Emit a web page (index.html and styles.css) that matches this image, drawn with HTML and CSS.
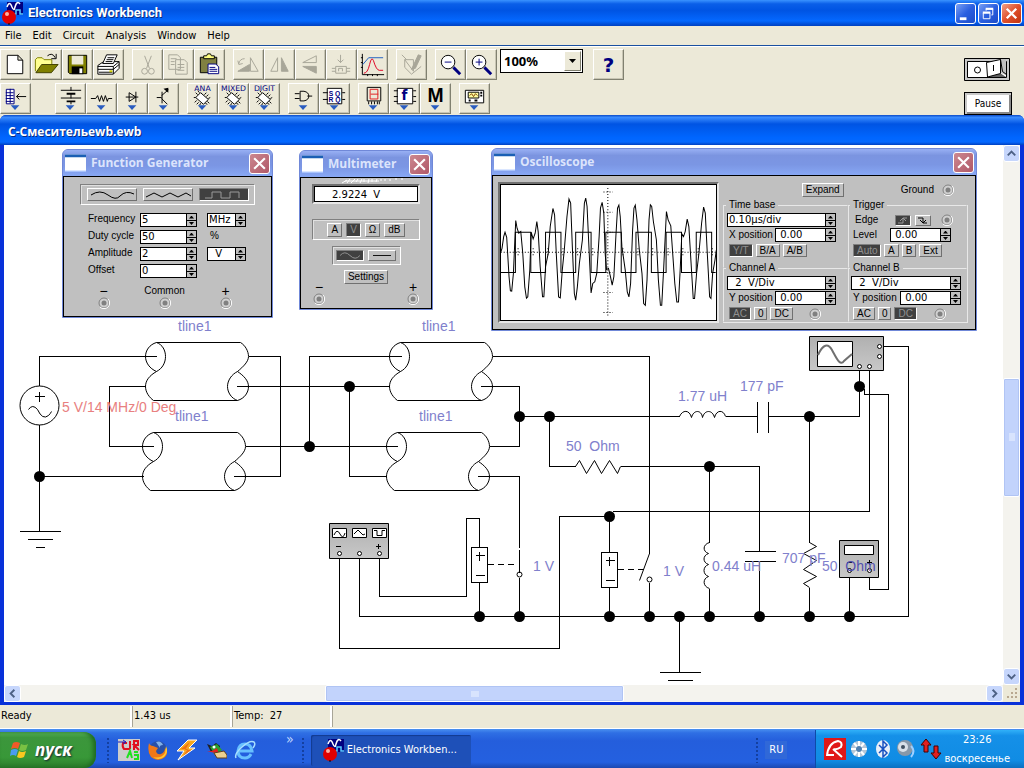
FILE: index.html
```html
<!DOCTYPE html>
<html lang="en">
<head>
<meta charset="utf-8">
<title>Electronics Workbench</title>
<link rel="stylesheet" href="styles.css">
</head>
<body>
<svg class="defs" aria-hidden="true">
  <defs>
    <symbol id="app" viewBox="0 0 24 24">
      <path d="M7 1h16v13H7z" fill="#000080"/>
      <path d="M7 6q2.500-7 5 0q2 5 3 0q2-7 5-3" fill="none" stroke="#fff" stroke-width="1.500"/>
      <path d="M12 13h4V9h4v4h3" fill="none" stroke="#5cf" stroke-width="1.500"/>
      <circle cx="9" cy="16" r="7" fill="#e00000"/><circle cx="7" cy="13" r="2" fill="#ffb0a0"/>
      <path d="M9 22v2" stroke="#000"/>
    </symbol>
    <symbol id="jack" viewBox="0 0 12 12">
      <circle cx="6" cy="6" r="5" fill="#d0d0d0" stroke="#808080"/><path d="M2 10a5.500 5.500 0 0 0 8-8" fill="none" stroke="#fff"/>
      <circle cx="6" cy="6" r="2.500" fill="#808080"/>
    </symbol>
    <symbol id="cross" viewBox="0 0 14 14"><path d="M2 2l10 10M12 2L2 12" stroke="#fff" stroke-width="2"/></symbol>
    <symbol id="winicon" viewBox="0 0 22 18"><path d="M0 0h22v18H0z" fill="#fff"/><path d="M0 0h22v3H0z" fill="#1a5fb4"/><path d="M0 17.500h22" stroke="#9bf"/></symbol>
    <symbol id="drop" viewBox="0 0 30 30"><path d="M10 22h9l-4.500 5z" fill="#2a5cc0"/></symbol>
    <symbol id="chip" viewBox="0 0 30 30">
      <path d="M13 9l8 7-5 5-8-7z" fill="#fff" stroke="#000"/>
      <path d="M10 11l-2-2M12 9l-2-2M8 14l-2 0M17 11l2-2M19 13l2-2M21 15l2-1M9 17l-2 2M11 19l-2 2M13 20l-1 2M20 18l2 2M18 20l2 1" stroke="#000"/>
    </symbol>
    <symbol id="tline" viewBox="0 0 104 60" overflow="visible">
      <path d="M11 0C4 2 0 8 0 14S4 26 11 29C17 26 20 20 20 14S17 2 11 0H95C100 3 103 9 103 14S98 24 92 29C86 32 82 38 82 44S86 56 92 58C99 56 103 50 103 44S98 33 92 29M11 29C4 33 0 38 0 44S4 55 8 58H92"/>
    </symbol>
    <linearGradient id="steel" x2="0" y2="1"><stop stop-color="#b0b0b0"/><stop offset="1" stop-color="#c8c8c8"/></linearGradient>
  </defs>
</svg>

<header class="titlebar">
  <svg class="appicon"><use href="#app"/></svg>
  <h1 class="caption">Electronics Workbench</h1>
  <div class="winbuttons">
    <button class="wb" aria-label="Minimize"><svg viewBox="0 0 20 20"><path d="M4 14h7v3H4z" fill="#fff"/></svg></button>
    <button class="wb" aria-label="Restore"><svg viewBox="0 0 20 20"><path d="M7.500 7V5.500h7v6H13M4.500 9.500h7v6h-7z" fill="none" stroke="#fff"/><path d="M7 5h8M4 9h8" stroke="#fff" stroke-width="2"/></svg></button>
    <button class="wb close" aria-label="Close"><svg viewBox="0 0 20 20"><path d="M5 5l10 10M15 5L5 15" stroke="#fff" stroke-width="2.500"/></svg></button>
  </div>
</header>

<nav class="menubar">
  <button>File</button><button>Edit</button><button>Circuit</button><button>Analysis</button><button>Window</button><button>Help</button>
</nav>

<section class="toolbars">
  <div class="toolrows">
    <div class="toolrow">
      <div class="group">
        <button class="tool" aria-label="New"><svg viewBox="0 0 30 30"><path d="M6.500 5.500h11l5 5v14h-16zM17.500 5.500v5h5" fill="#fff" stroke="#000"/></svg></button>
        <button class="tool" aria-label="Open"><svg viewBox="0 0 30 30"><path d="M3.500 22V10l2-2h5l2 2h8v5" fill="#ffff90" stroke="#808000"/><path d="M4 23.500l6-8.500h17l-7 8.500z" fill="#808000" stroke="#404000"/><path d="M16 6q5-4 8 2m1-4v5h-5" fill="none" stroke="#000"/></svg></button>
        <button class="tool" aria-label="Save"><svg viewBox="0 0 30 30"><path d="M5.500 5.500h19v19H7l-1.500-1.500z" fill="#808000" stroke="#000"/><path d="M9 6h12v9H9z" fill="#ece9d8"/><path d="M9 17h12v8H9z" fill="#000"/><path d="M17 19h3v5h-3z" fill="#fff"/></svg></button>
        <button class="tool" aria-label="Print"><svg viewBox="0 0 30 30"><path d="M4 16l6-4h16v7l-6 6H4z" fill="#fff" stroke="#000"/><path d="M9 14l4-9h11l-4 9z" fill="#fff" stroke="#000"/><path d="M14 8h7M13 10h7M12 12h7M4 17h16l6-5M4 20h16l6-5M20 17v8M5 23h14" fill="none" stroke="#000"/><path d="M16 22h3" stroke="#cc0" stroke-width="2"/></svg></button>
      </div>
      <div class="group">
        <button class="tool off" aria-label="Cut"><svg viewBox="0 0 30 30"><path d="M12 6l5 13M19 6l-5 13"/><circle cx="12" cy="22" r="3"/><circle cx="19" cy="22" r="3"/></svg></button>
        <button class="tool off" aria-label="Copy"><svg viewBox="0 0 30 30"><path d="M5 5h9l3 3v12H5zM12 10h9l3 3v12H12zM7 9h6M7 12h4M7 15h4M14 15h7M14 18h7M14 21h7"/></svg></button>
        <button class="tool" aria-label="Paste"><svg viewBox="0 0 30 30"><path d="M5.500 7.500h17v16h-17z" fill="#808040" stroke="#000"/><path d="M9 9V6h3l1-2h3l1 2h3v3z" fill="#ffff80" stroke="#000"/><path d="M13.500 14.500h8l3 3v7h-11z" fill="#fff" stroke="#000080"/><path d="M15 18h6M15 20h8M15 22h8" stroke="#000080"/></svg></button>
      </div>
      <div class="group">
        <button class="tool off" aria-label="Rotate"><svg viewBox="0 0 30 30"><path d="M4 22l12-7v7z" class="fill"/><path d="M17 22V8l8 14zM5 14q1-5 6-5M4 11l1 4 4-1"/></svg></button>
        <button class="tool off" aria-label="Flip horizontal"><svg viewBox="0 0 30 30"><path d="M13 22V8L6 22z"/><path d="M17 22V8l7 14z" class="fill"/></svg></button>
        <button class="tool off" aria-label="Flip vertical"><svg viewBox="0 0 30 30"><path d="M21 6v7H7z"/><path d="M21 24v-7H7z" class="fill"/></svg></button>
        <button class="tool off" aria-label="Create subcircuit"><svg viewBox="0 0 30 30"><path d="M9 17h11v7H9zM5 19h4M5 22h4M20 19h4M20 22h4M14 5v8M11 10l3 3 3-3M12 22v-3h4v3"/></svg></button>
        <button class="tool" aria-label="Display graphs"><svg viewBox="0 0 30 30"><path d="M4.500 4v21.500H27M3 8h2M3 13h2M3 18h2M10 25v2M15 25v2M20 25v2" fill="none" stroke="#000"/><path d="M5 15l6-7h15" fill="none" stroke="#2060c0"/><path d="M6 24q4 0 6-9t4-4q3 10 6 10h4" fill="none" stroke="#e00020"/></svg></button>
      </div>
      <div class="group">
        <button class="tool off" aria-label="Component properties"><svg viewBox="0 0 30 30"><path d="M5 5l5 5M8 10h9v12zM8 10v8l7 7 10-8"/><path d="M15 20l7-15 3 1-6 13z" class="fill"/></svg></button>
      </div>
      <div class="group">
        <button class="tool" aria-label="Zoom out"><svg viewBox="0 0 30 30"><path d="M18 18l7 7" stroke="#000080" stroke-width="3"/><circle cx="12.500" cy="12.500" r="7" fill="#fff" stroke="#000"/><path d="M9 12.500h7" stroke="#000080"/></svg></button>
        <button class="tool" aria-label="Zoom in"><svg viewBox="0 0 30 30"><path d="M18 18l7 7" stroke="#000080" stroke-width="3"/><circle cx="12.500" cy="12.500" r="7" fill="#fff" stroke="#000"/><path d="M9 12.500h7M12.500 9v7" stroke="#000080"/></svg></button>
      </div>
      <div class="zoombox">
        <select class="zoom" aria-label="Zoom"><option>100%</option></select>
        <span class="zoomarrow" aria-hidden="true"></span>
      </div>
      <button class="tool help" aria-label="Help">?</button>
    </div>
    <div class="toolrow second">
      <div class="group wide">
        <button class="tool" aria-label="Favorites"><svg viewBox="0 0 30 30"><path d="M5.500 5.500h8v15h-8zM5 9h8M5 12h8M5 15h8M5 18h8M9.500 5v15" fill="#fff" stroke="#000080"/><path d="M16 13h10M19 10l-3 3 3 3" fill="none" stroke="#000"/><use href="#drop"/></svg></button>
      </div>
      <div class="group">
        <button class="tool" aria-label="Sources"><svg viewBox="0 0 30 30"><path d="M5 6.500h21M5 14.500h21M15.500 3v4M15.500 10v5M15.500 18v3" stroke="#000"/><path d="M11 10h9M11 18h9" stroke="#000" stroke-width="2"/><use href="#drop"/></svg></button>
        <button class="tool" aria-label="Basic"><svg viewBox="0 0 30 30"><path d="M4 15h5l2-3 2 6 2-6 2 6 2-6 2 6 1-3h4" fill="none" stroke="#000"/><use href="#drop"/></svg></button>
        <button class="tool" aria-label="Diodes"><svg viewBox="0 0 30 30"><path d="M8 13.500h13M11.500 9v9l7-4.500zM18.500 8v11" fill="none" stroke="#000"/><use href="#drop"/></svg></button>
        <button class="tool" aria-label="Transistors"><svg viewBox="0 0 30 30"><path d="M8 14h5M13.500 8v12M13 12l7-6M13 15l6 6" fill="none" stroke="#000"/><path d="M20 4v5l-5-4z"/><use href="#drop"/></svg></button>
      </div>
      <div class="group">
        <button class="tool" aria-label="Analog ICs"><svg viewBox="0 0 30 30"><use href="#chip"/><text x="15" y="7" class="chiptext">ANA</text><use href="#drop"/></svg></button>
        <button class="tool" aria-label="Mixed ICs"><svg viewBox="0 0 30 30"><use href="#chip"/><text x="15" y="7" class="chiptext">MIXED</text><use href="#drop"/></svg></button>
        <button class="tool" aria-label="Digital ICs"><svg viewBox="0 0 30 30"><use href="#chip"/><text x="15" y="7" class="chiptext">DIGIT</text><use href="#drop"/></svg></button>
      </div>
      <div class="group">
        <button class="tool" aria-label="Logic gates"><svg viewBox="0 0 30 30"><path d="M6 10h5M6 15h5M19 12.500h5M11.500 7.500h4q5 1 5 5t-5 5h-4z" fill="none" stroke="#000"/><use href="#drop"/></svg></button>
        <button class="tool" aria-label="Digital"><svg viewBox="0 0 30 30"><path d="M7.500 4.500h15v16h-15zM3 9h5M3 16h5M23 9h3M23 16h3" fill="#fff" stroke="#000"/><text x="15" y="12" class="tiny">S Q</text><text x="15" y="19" class="tiny">R Q</text><use href="#drop"/></svg></button>
      </div>
      <div class="group">
        <button class="tool" aria-label="Indicators"><svg viewBox="0 0 30 30"><path d="M8.500 3.500h14v14h-14zM10 18v3M13 18v3M16 18v3M19 18v3M21 18v3" fill="#ece9d8" stroke="#000"/><path d="M11.500 5.500h8v10h-8zM12 10.500h8" fill="none" stroke="#e02020"/><use href="#drop"/></svg></button>
        <button class="tool" aria-label="Controls"><svg viewBox="0 0 30 30"><path d="M7.500 4.500h16v16h-16zM4 7h4M4 13h4M4 18h4M24 7h3M24 13h3M24 18h3" fill="#fff" stroke="#000"/><text x="15" y="17" class="fx">f</text><use href="#drop"/></svg></button>
        <button class="tool" aria-label="Miscellaneous"><svg viewBox="0 0 30 30"><text x="15" y="19" class="em">M</text><use href="#drop"/></svg></button>
      </div>
      <div class="group">
        <button class="tool" aria-label="Instruments"><svg viewBox="0 0 30 30"><path d="M5.500 6.500h19v13h-19z" fill="#fff" stroke="#000"/><path d="M8.500 8.500h11v6h-11z" fill="#ffffa0" stroke="#000"/><path d="M10 12l2-2 2 3 2-3 2 2" fill="none" stroke="#804000"/><path d="M9 17h2M15 17h3M21 9h2M21 12h2" stroke="#000" stroke-width="2"/><use href="#drop"/></svg></button>
      </div>
    </div>
  </div>
  <div class="runbox">
    <button class="power" aria-label="Activate simulation"><svg viewBox="0 0 48 24"><path d="M.5.500h45v22H.5z" fill="#c8c8c8" stroke="#000"/><path d="M3.500 3.500h39v16h-39z" fill="#fff" stroke="#000"/><circle cx="13.500" cy="12" r="3" fill="none" stroke="#000"/><path d="M37 1h5v16l-5-2z" fill="#c0c0c0"/><path d="M23 19l13-4 6 4z" fill="#606060"/><path d="M22.500 4.500l14-3v14l-13 3.500z" fill="#fff" stroke="#000"/><path d="M36.500 1.500l2 12 4 3M29.500 7v6" fill="none" stroke="#000"/></svg></button>
    <button class="pause">Pause</button>
  </div>
</section>

<main class="mdi">
  <h2 class="mdititle">С-Смесительewb.ewb</h2>
  <div class="client">
    <div class="canvas">
      <svg class="schematic" viewBox="4 145 999 541" width="999" height="541" role="img" aria-label="Mixer circuit">
        <g class="wires">
          <path d="M39 385V356H156M39 424V531M39 476H143M145 386H109V446H153M248 356H280V476H233M236 386H389M245 446H397M309 446V356H401M349 386V476H386M492 356H649V553M480 386H519V446H489M477 476H519V547M519 549V572M519 577V616M519 416H679M725 416H757M768 416H859V370M549 416V466H575M620 466H759V551M759 561V616M709 466V542M709 588V616M612 511H869V370M609 552V516H559V648H339V556M609 587V616M649 582V616M679 616V672M359 556V616H908V346H883M379 556V596H466V518H479V547M479 582V616M809 416V542M809 587V616M849 573V616M869 573V589H888V394H864V389H861"/>
          <path d="M19 531H60M27 539H52M35 547H44M659 672H700M667 680H692M757 401V432M768 401V432M744 551H775M744 561H775M471 547H487V582H471zM601 552H617V587H601zM475 555H484M479 551V560M475 575H484M605 560H614M609 556V565M605 580H614M34 396H44M39 391V401"/>
          <path class="dash" d="M487 564H515M617 569H644"/>
        </g>
        <g class="parts">
          <circle cx="39" cy="405" r="19.500"/>
          <path d="M28 409Q32 403 37 409Q42 420 48 415Q50 413 51 411"/>
          <use href="#tline" x="145" y="342" width="104" height="60"/>
          <use href="#tline" x="142" y="432" width="104" height="60"/>
          <use href="#tline" x="389" y="342" width="104" height="60"/>
          <use href="#tline" x="386" y="432" width="104" height="60"/>
          <path d="M575 466L579 460L586 473L594 460L601 473L609 460L617 473L620 466M809 542L816 546L803 553L816 560L803 569L816 576L803 583L809 587"/>
          <path d="M679 416C682 409 689 409 691 417C693 409 701 409 702 417C704 409 712 409 714 417C716 409 723 409 725 416M709 542C702 544 702 551 708 553C702 555 702 562 708 564C702 566 702 574 708 576C702 578 702 586 709 588"/>
          <path d="M649 553L639 580"/><circle cx="519" cy="574" r="2.500"/><circle cx="649" cy="579" r="2.500"/>
        </g>
        <g class="nodes">
          <circle cx="39.500" cy="476.500" r="5.500"/><circle cx="309.500" cy="446.500" r="5.500"/><circle cx="349.500" cy="386.500" r="5.500"/><circle cx="519.500" cy="416.500" r="5.500"/><circle cx="549.500" cy="416.500" r="5.500"/><circle cx="709.500" cy="466.500" r="5.500"/><circle cx="809.500" cy="416.500" r="5.500"/><circle cx="859.500" cy="386.500" r="5.500"/><circle cx="609.500" cy="516.500" r="5.500"/><circle cx="479.500" cy="616.500" r="5.500"/><circle cx="519.500" cy="616.500" r="5.500"/><circle cx="609.500" cy="616.500" r="5.500"/><circle cx="649.500" cy="616.500" r="5.500"/><circle cx="679.500" cy="616.500" r="5.500"/><circle cx="709.500" cy="616.500" r="5.500"/><circle cx="759.500" cy="616.500" r="5.500"/><circle cx="809.500" cy="616.500" r="5.500"/><circle cx="849.500" cy="616.500" r="5.500"/>
        </g>
        <g class="instr">
          <path class="box" d="M329.500 523.500h59v35h-59z"/>
          <path class="lcd" d="M332.500 528.500h14v9h-14zM352.500 528.500h14v9h-14zM372.500 528.500h14v9h-14z"/>
          <path d="M334 535q3-7 6-1t5-1M354 534l4-4 5 5 2-1M374 530.500h3v5h5v-5h3M336 546.500h5M376 546.500h5M378.500 544v5"/>
          <circle cx="339.500" cy="553.500" r="2"/><circle cx="359.500" cy="553.500" r="2"/><circle cx="379.500" cy="553.500" r="2"/>
          <path class="box" d="M809.500 336.500h74v34h-74z"/>
          <path class="lcd" d="M817.500 341.500h35v25h-35z"/>
          <path class="scope" d="M818 355C823 344 828 343 832 350S840 367 844 361T852 354"/>
          <circle cx="879.500" cy="346.500" r="2"/><circle cx="879.500" cy="356.500" r="2"/><circle cx="859.500" cy="366.500" r="2"/><circle cx="869.500" cy="366.500" r="2"/>
          <path class="box" d="M839.500 540.500h39v37h-39z"/>
          <path class="lcd" d="M844.500 545.500h29v9h-29z"/>
          <path d="M847 562.500h5M867 562.500h5M869.500 560v5"/>
          <circle cx="849.500" cy="570.500" r="2"/><circle cx="869.500" cy="570.500" r="2"/>
        </g>
        <g class="labels">
          <text x="178" y="331">tline1</text><text x="422" y="331">tline1</text><text x="175" y="421">tline1</text><text x="419" y="421">tline1</text>
          <text x="62" y="412" class="red">5 V/14 MHz/0 Deg</text>
          <text x="678" y="401">1.77 uH</text><text x="740" y="391">177 pF</text><text x="566" y="451">50  Ohm</text>
          <text x="712" y="571">0.44 uH</text><text x="782" y="563">707 pF</text><text x="822" y="571">50  <tspan class="dark">Ohm</tspan></text>
          <text x="533" y="571">1 V</text><text x="663" y="576">1 V</text>
        </g>
      </svg>

      <section class="win fg">
        <header class="wintitle"><svg class="winicon"><use href="#winicon"/></svg><h3>Function Generator</h3><button class="winclose" aria-label="Close"><svg><use href="#cross"/></svg></button></header>
        <div class="winbody">
          <div class="etched waves">
            <button class="btn wave" aria-label="Sine"><svg viewBox="0 0 48 10"><path d="M3 5Q12-1 20 5T32 6Q38 0 46 4"/></svg></button>
            <button class="btn wave" aria-label="Triangle"><svg viewBox="0 0 48 10"><path d="M2 7l8-4 8 4 8-4 8 4 8-4 5 3"/></svg></button>
            <button class="btn wave on" aria-label="Square"><svg viewBox="0 0 48 10"><path d="M5 8h7V2h9v6h9V2h9v6"/></svg></button>
          </div>
          <div class="params">
            <label for="fr">Frequency</label><span class="field"><input id="fr" value="5"><span class="spin"><button aria-label="Up"></button><button aria-label="Down"></button></span></span>
            <span class="field unit"><input aria-label="Frequency unit" value="MHz"><span class="spin"><button aria-label="Up"></button><button aria-label="Down"></button></span></span>
            <label for="dc">Duty cycle</label><span class="field"><input id="dc" value="50"><span class="spin"><button aria-label="Up"></button><button aria-label="Down"></button></span></span><span class="pct">%</span>
            <label for="am">Amplitude</label><span class="field"><input id="am" value="2"><span class="spin"><button aria-label="Up"></button><button aria-label="Down"></button></span></span>
            <span class="field unit"><input aria-label="Amplitude unit" value="  V"><span class="spin"><button aria-label="Up"></button><button aria-label="Down"></button></span></span>
            <label for="of">Offset</label><span class="field"><input id="of" value="0"><span class="spin"><button aria-label="Up"></button><button aria-label="Down"></button></span></span>
          </div>
          <div class="terminals">
            <span class="term"><b class="sign">−</b><svg class="jack"><use href="#jack"/></svg></span>
            <span class="term">Common<svg class="jack"><use href="#jack"/></svg></span>
            <span class="term"><b class="sign">+</b><svg class="jack"><use href="#jack"/></svg></span>
          </div>
        </div>
      </section>

      <section class="win mm">
        <header class="wintitle"><svg class="winicon"><use href="#winicon"/></svg><h3>Multimeter</h3><button class="winclose" aria-label="Close"><svg><use href="#cross"/></svg></button></header>
        <div class="winbody">
          <svg class="smear" viewBox="0 0 64 6" aria-hidden="true"><path d="M1 5l5-3M6 5l3-4M10 5l4-4M15 4l2-3M19 5l2-4M23 4V1M27 5l1-4M31 4V1M35 4l1-3M40 3V1M44 3V1M49 3V1M55 2V0M61 2V0M4 3h34"/></svg>
          <output class="reading">2.9224&nbsp; V</output>
          <div class="etched modes"><button class="btn">A</button><button class="btn on">V</button><button class="btn">Ω</button><button class="btn">dB</button></div>
          <div class="etched acdc"><button class="btn on" aria-label="AC"><svg viewBox="0 0 26 10"><path d="M2 5q5-6 11 0t11 0"/></svg></button><button class="btn" aria-label="DC"><svg viewBox="0 0 26 10"><path d="M3 5h20"/></svg></button></div>
          <button class="btn settings">Settings</button>
          <div class="terminals">
            <span class="term"><b class="sign">−</b><svg class="jack"><use href="#jack"/></svg></span>
            <span class="term"><b class="sign">+</b><svg class="jack"><use href="#jack"/></svg></span>
          </div>
        </div>
      </section>

      <section class="win osc">
        <header class="wintitle"><svg class="winicon"><use href="#winicon"/></svg><h3>Oscilloscope</h3><button class="winclose" aria-label="Close"><svg><use href="#cross"/></svg></button></header>
        <div class="winbody">
          <div class="screen">
            <svg viewBox="48 135 648 405" role="img" aria-label="Waveforms">
              <path class="axis" d="M370 145V532M50 337H694"/>
              <path class="ticks" d="M357 157H385M357 217H385M357 277H385M357 397H385M357 457H385M357 517H385M102 325V352M147 325V352M191 325V352M236 325V352M280 325V352M325 325V352M415 325V352M460 325V352M504 325V352M550 325V352M594 325V352M640 325V352M682 325V352"/>
              <path d="M48 277V397H94V277H140V397H184V277H230V397H274V277H320V397H364V277H410V397H454V277H500V397H544V277H590V397H634V277H680V397H692"/>
              <path d="M50 337L54 325L59 290L63 277L68 292L75 410L79 452L83 453L88 400L95 242L99 265L104 280L110 275L116 340L122 440L127 474L131 470L137 390L141 277L147 297L153 280L158 245L162 275L168 380L175 470L179 470L184 380L192 340L198 260L206 206L211 225L216 340L223 470L228 473L234 390L240 330L248 230L254 178L259 190L264 320L270 460L274 480L279 440L285 370L294 300L300 190L304 175L308 200L314 330L320 458L325 430L331 425L337 400L344 290L348 205L353 188L358 220L362 340L366 388L372 385L378 410L383 435L388 410L394 290L399 205L403 196L407 230L412 320L422 390L428 455L433 470L438 430L444 270L448 205L452 196L457 240L464 330L472 400L477 490L482 495L487 420L493 240L497 195L501 200L506 245L515 300L521 420L527 495L531 495L537 380L545 215L550 240L558 258L563 330L570 430L576 485L581 485L586 390L591 282L596 290L601 275L607 238L612 260L618 360L625 475L629 475L635 400L642 340L650 250L656 202L661 220L667 340L674 470L678 475L683 400L690 360L694 330"/>
            </svg>
          </div>
          <div class="controls">
            <div class="top"><button class="btn expand">Expand</button><span class="ground">Ground<svg class="jack"><use href="#jack"/></svg></span></div>
            <div class="panels">
              <section class="panel">
                <h4>Time base</h4>
                <span class="field"><input aria-label="Time base" value="0.10µs/div"><span class="spin"><button aria-label="Up"></button><button aria-label="Down"></button></span></span>
                <div class="line"><label for="xp">X position</label><span class="field short"><input id="xp" value=" 0.00"><span class="spin"><button aria-label="Up"></button><button aria-label="Down"></button></span></span></div>
                <div class="btnrow"><button class="btn on">Y/T</button><button class="btn">B/A</button><button class="btn">A/B</button></div>
              </section>
              <section class="panel">
                <h4>Trigger</h4>
                <div class="edge"><span>Edge</span><button class="btn on" aria-label="Rising edge"><svg viewBox="0 0 14 9"><path d="M2 7h5V2h4M4 5l3-3 3 3"/></svg></button><button class="btn" aria-label="Falling edge"><svg viewBox="0 0 14 9"><path d="M2 2h5v5h4M4 4l3 3 3-3"/></svg></button><svg class="jack"><use href="#jack"/></svg></div>
                <div class="line level"><label for="lv">Level</label><span class="field short"><input id="lv" value=" 0.00"><span class="spin"><button aria-label="Up"></button><button aria-label="Down"></button></span></span></div>
                <div class="btnrow"><button class="btn on auto">Auto</button><button class="btn">A</button><button class="btn">B</button><button class="btn">Ext</button></div>
              </section>
              <section class="panel">
                <h4>Channel A</h4>
                <span class="field"><input aria-label="Channel A scale" value="  2  V/Div"><span class="spin"><button aria-label="Up"></button><button aria-label="Down"></button></span></span>
                <div class="line"><label for="ya">Y position</label><span class="field short"><input id="ya" value=" 0.00"><span class="spin"><button aria-label="Up"></button><button aria-label="Down"></button></span></span></div>
                <div class="btnrow"><button class="btn on">AC</button><button class="btn">0</button><button class="btn">DC</button><svg class="jack"><use href="#jack"/></svg></div>
              </section>
              <section class="panel">
                <h4>Channel B</h4>
                <span class="field"><input aria-label="Channel B scale" value="  2  V/Div"><span class="spin"><button aria-label="Up"></button><button aria-label="Down"></button></span></span>
                <div class="line"><label for="yb">Y position</label><span class="field short"><input id="yb" value=" 0.00"><span class="spin"><button aria-label="Up"></button><button aria-label="Down"></button></span></span></div>
                <div class="btnrow"><button class="btn">AC</button><button class="btn">0</button><button class="btn on">DC</button><svg class="jack"><use href="#jack"/></svg></div>
              </section>
            </div>
          </div>
        </div>
      </section>
    </div>
    <div class="vscroll">
      <button class="sb" aria-label="Scroll up"><svg viewBox="0 0 16 16"><path d="M4 10l4-4 4 4"/></svg></button>
      <div class="vtrack"><div class="vthumb"><svg viewBox="0 0 8 8"><path d="M1 1h6M1 3h6M1 5h6M1 7h6"/></svg></div></div>
      <button class="sb" aria-label="Scroll down"><svg viewBox="0 0 16 16"><path d="M4 6l4 4 4-4"/></svg></button>
    </div>
    <div class="hscroll">
      <button class="sb" aria-label="Scroll left"><svg viewBox="0 0 16 16"><path d="M10 4L6 8l4 4"/></svg></button>
      <div class="htrack"><div class="hthumb"><svg viewBox="0 0 8 8"><path d="M1 1v6M3 1v6M5 1v6M7 1v6"/></svg></div></div>
      <button class="sb" aria-label="Scroll right"><svg viewBox="0 0 16 16"><path d="M6 4l4 4-4 4"/></svg></button>
    </div>
    <svg class="grip" viewBox="0 0 17 17" aria-hidden="true"><path d="M12 4h2M8 8h2M12 8h2M4 12h2M8 12h2M12 12h2" stroke="#b8a890" stroke-width="2"/></svg>
  </div>
</main>

<footer class="status"><span>Ready</span><span>1.43 us</span><span>Temp:&nbsp; 27</span><span></span></footer>

<footer class="taskbar">
  <button class="start"><svg viewBox="0 0 20 20"><path d="M3 3q3-2 7 0L8 9Q5 7 1 9z" fill="#f05a28"/><path d="M11 4q4 2 7 0l-2 6q-4 2-7 0z" fill="#7ac143"/><path d="M1 10q4-2 7 0l-2 6q-3-2-6 0z" fill="#4a9cf0"/><path d="M9 11q3 2 7 0l-2 6q-4 2-7 0z" fill="#fcc820"/></svg><span>пуск</span></button>
  <span class="dots"></span>
  <div class="quick">
    <button aria-label="Circuit editor"><svg viewBox="0 0 22 22"><path d="M0 0h22v22H0z" fill="#ccc"/><path d="M9 4H5q-1 4 1 6h3M12 2v8M12 10H9M16 11V2h4v4h-4l5 5" fill="none" stroke="#e01020" stroke-width="2"/><path d="M0 3h8M5 1l3 2-3 2" fill="none" stroke="#2020c0"/><path d="M9 19l3-7 2 7M16 13h4M16 16h4v4h-4" fill="none" stroke="#20e020" stroke-width="2"/></svg></button>
    <button aria-label="Firefox"><svg viewBox="0 0 22 22"><circle cx="11" cy="11" r="9" fill="#2850a8"/><path d="M9 3q5-2 7 3-4 0-3 3z" fill="#80b0e8"/><path d="M2 4q1 3 4 3l5 2-2 3q1 4 5 3 4-2 4-6 4 5 0 9-7 6-14 0Q0 13 2 4z" fill="#f07818"/><path d="M19 7q3 6-2 11-6 4-11 0 8 2 12-4z" fill="#ffc830"/></svg></button>
    <button aria-label="Winamp"><svg viewBox="0 0 22 22"><path d="M12 1h9l-8 8h6L2 21l6-9H1z" fill="#f8a820" stroke="#fff"/><path d="M14 3l-9 7h7l-5 7 8-6H9z" fill="#f07010"/></svg></button>
    <button aria-label="Messenger"><svg viewBox="0 0 22 22"><path d="M2 5l5 2 4-3 4 3v6H6z" fill="#202020"/><path d="M5 8l7-3 5 6-7 5z" fill="#28a030"/><path d="M2 12h5l5-3 2 6z" fill="#e02020"/><path d="M9 14l10-2 3 4v3H12z" fill="#ecd090" stroke="#604020"/><circle cx="9" cy="8" r="1.500" fill="#fff"/></svg></button>
    <button aria-label="Internet Explorer"><svg viewBox="0 0 22 22"><path d="M17 15q-2 4-6 4-7 0-7-7 1-7 7-7t7 7H5" fill="none" stroke="#68c0ff" stroke-width="3"/><path d="M2 19Q0 15 8 8T20 3q2 2-1 6" fill="none" stroke="#a8e0ff" stroke-width="1.500"/></svg></button>
  </div>
  <span class="more">»</span>
  <span class="dots"></span>
  <button class="task"><svg class="appicon"><use href="#app"/></svg><span>Electronics Workben...</span></button>
  <span class="dots traydots"></span>
  <span class="lang">RU</span>
  <div class="tray">
    <svg viewBox="0 0 22 22"><path d="M0 0h22v22H0z" fill="#e01818"/><path d="M3 18Q4 5 14 3q5 1 3 6-4 3-7 2M9 11l9 8M4 17h6" fill="none" stroke="#fff" stroke-width="2"/></svg>
    <svg viewBox="0 0 22 22"><circle cx="11" cy="11" r="8" fill="#b8c8d8"/><path d="M11 3v16M3 11h16M6 5l10 12M16 5L6 17" stroke="#fff" stroke-width="2"/><circle cx="11" cy="11" r="3" fill="#5080b0"/></svg>
    <svg viewBox="0 0 22 22"><ellipse cx="11" cy="11" rx="7" ry="9" fill="#e8eef8"/><path d="M7 7l8 8-4 4V3l4 4-8 8" fill="none" stroke="#1850c0" stroke-width="1.500"/></svg>
    <svg viewBox="0 0 22 22"><circle cx="9" cy="10" r="8" fill="#8898a8"/><circle cx="7" cy="9" r="5" fill="#d8e0e8"/><circle cx="7" cy="9" r="2" fill="#405060"/><path d="M15 8q5 5 0 11" fill="none" stroke="#a0d0ff" stroke-width="2"/></svg>
    <svg viewBox="0 0 22 22"><path d="M6 1l5 6H8v7H4V7H1z" fill="#e02020" stroke="#400"/><path d="M16 21l-5-6h3V8h4v7h3z" fill="#e02020" stroke="#400"/></svg>
    <div class="clock"><span>23:26</span><span>воскресенье</span></div>
  </div>
</footer>
</body>
</html>
```
FILE: styles.css
```css
* { box-sizing: border-box; }
body {
  margin: 0;
  height: 100vh;
  display: flex;
  flex-direction: column;
  overflow: hidden;
  background: #ece9d8;
  color: #000;
  font: 11px/14px "DejaVu Sans Condensed", "Noto Sans", sans-serif;
}
h1, h2, h3, h4 { margin: 0; font-size: inherit; font-weight: inherit; }
button, input, select { font: inherit; color: inherit; margin: 0; padding: 0; border: 0; border-radius: 0; background: none; }
svg { display: block; flex: none; }
.defs { position: absolute; width: 0; height: 0; }

.titlebar {
  flex: none;
  height: 26px;
  display: flex;
  align-items: center;
  gap: 4px;
  padding-right: 2px;
  background: linear-gradient(#3a93ff 0, #0a5fe8 15%, #0054e3 40%, #0468ff 80%, #0040c0 100%);
}
.appicon { width: 24px; height: 24px; }
.caption, .mdititle {
  color: #fff;
  text-shadow: 1px 1px 0 #0a2a80;
}
.caption { flex: 1; font: bold 13px/16px Roboto, sans-serif; }
.mdititle { font: bold 12px/16px "Open Sans", sans-serif; }
.winbuttons { display: flex; gap: 2px; }
.wb {
  width: 21px;
  height: 21px;
  border: 1px solid #fff;
  border-radius: 3px;
  background: linear-gradient(135deg, #7aa0f4, #2a5fe0 50%, #1c4cc8);
}
.wb svg { width: 19px; height: 19px; }
.wb.close { background: linear-gradient(135deg, #f0a088, #e0502c 50%, #c03410); }

.menubar {
  flex: none;
  height: 20px;
  display: flex;
  align-items: center;
  gap: 11px;
  padding: 0 5px;
  border-bottom: 1px solid #1a50a0;
}

.toolbars {
  flex: none;
  display: flex;
  justify-content: space-between;
  border-top: 1px solid #fff;
  padding: 2px 12px 0 0;
}
.toolrows { display: flex; flex-direction: column; gap: 3px; }
.toolrow { display: flex; align-items: flex-start; gap: 8px; }
.group { display: flex; }
.wide { margin-right: 16px; }
.tool {
  width: 31px;
  height: 31px;
  border: 1px solid;
  border-color: #fff #808070 #808070 #fff;
  box-shadow: inset -1px -1px 0 #c8c5b4;
}
.tool svg { width: 29px; height: 29px; }
.off path, .off circle { fill: none; stroke: #a8a698; }
.off .fill { fill: #a8a698; }
.chiptext { font: 8px "DejaVu Sans", sans-serif; fill: #000080; text-anchor: middle; }
.tiny { font: bold 7px "Liberation Sans", sans-serif; fill: #000080; text-anchor: middle; }
.fx { font: bold 14px "DejaVu Sans", sans-serif; fill: #000080; text-anchor: middle; }
.em { font: bold 20px "Liberation Sans", sans-serif; text-anchor: middle; }
.zoombox { position: relative; width: 83px; height: 24px; margin-left: -5px; border: 1px solid #000; background: #fff; }
.zoom { appearance: none; width: 100%; height: 22px; padding: 0 3px; font: bold 13px/20px "Noto Sans", sans-serif; }
.zoomarrow {
  position: absolute;
  top: 1px;
  right: 1px;
  width: 17px;
  height: 20px;
  border: 1px solid;
  border-color: #fff #808070 #808070 #fff;
  background: #ece9d8;
  pointer-events: none;
}
.zoomarrow::after { content: ""; display: block; margin: 7px auto; width: 7px; height: 4px; background: #000; clip-path: polygon(0 0, 100% 0, 50% 100%); }
.help { margin-left: 2px; color: #000080; font: bold 20px/28px "DejaVu Sans", sans-serif; }
.runbox { display: flex; flex-direction: column; gap: 10px; padding-top: 9px; }
.power, .power svg { width: 48px; height: 24px; }
.pause {
  width: 48px;
  height: 23px;
  border: 1px solid #000;
  box-shadow: inset 2px 2px 0 #c8c8c8, inset -2px -2px 0 #888;
  background: #fff;
  font: 10px/12px "DejaVu Sans Condensed", sans-serif;
}

.mdi { flex: 1; min-height: 0; display: flex; flex-direction: column; background: #0831d9; border-radius: 6px 6px 0 0; overflow: hidden; }
.mdititle {
  flex: none;
  height: 30px;
  padding: 9px 8px 5px;
  background: linear-gradient(#0a4ac8 0, #3a8cff 8%, #0054e3 30%, #0066ff 75%, #0468ff 90%, #0040c0 100%);
}
.client {
  flex: 1;
  min-height: 0;
  display: grid;
  grid-template-columns: 1fr 17px;
  grid-template-rows: 1fr 17px;
  margin: 0 4px 3px;
  background: #fff;
}
.canvas { position: relative; overflow: hidden; min-width: 0; min-height: 0; }
.vscroll { display: flex; flex-direction: column; background: #f4f3ee; }
.hscroll { display: flex; background: #f4f3ee; min-width: 0; }
.sb { flex: none; width: 17px; height: 17px; border: 1px solid #fff; border-radius: 3px; background: #c6d6fc; }
.sb svg { width: 15px; height: 15px; }
.sb path { fill: none; stroke: #4d6185; stroke-width: 2; }
.vtrack, .htrack { flex: 1; display: grid; }
.vtrack { grid-template-rows: 216fr 120fr 171fr; }
.htrack { grid-template-columns: 304fr 300fr 362fr; }
.vthumb, .hthumb { display: flex; align-items: center; justify-content: center; border: 1px solid #fff; border-radius: 2px; background: #c2d3fc; box-shadow: inset 0 0 0 1px #b0c4f4; }
.vthumb { grid-row: 2; }
.hthumb { grid-column: 2; }
.vthumb svg, .hthumb svg { width: 8px; height: 8px; }
.vthumb path, .hthumb path { stroke: #eef4ff; }
.grip { background: #ece9d8; width: 17px; height: 17px; }

.wires path { fill: none; stroke: #000; shape-rendering: crispEdges; }
.wires { transform: translate(.5px, .5px); }
.wires .dash { stroke-dasharray: 6 4; }
.parts { fill: none; stroke: #000; transform: translate(.5px, .5px); }
.instr { fill: none; stroke: #000; }
.instr .box { fill: url(#steel); stroke: #000; }
.instr .lcd, .instr circle { fill: #fff; }
.instr .scope { stroke: #707070; stroke-width: 2; }
.labels { font: 14px "Liberation Sans", sans-serif; fill: #8080cc; }
.labels text { white-space: pre; }
.labels .red { fill: #e88080; }
.labels .dark { fill: #5050b0; }

.win {
  position: absolute;
  border: 1px solid #7088d8;
  border-radius: 6px 6px 0 0;
  background: #8ca4ec;
  font: 10px/12px "Liberation Sans", sans-serif;
}
.fg { left: 58px; top: 4px; width: 211px; }
.mm { left: 295px; top: 5px; width: 134px; }
.osc { left: 487px; top: 3px; width: 486px; }
.wintitle {
  height: 26px;
  display: flex;
  align-items: center;
  gap: 5px;
  padding: 0 2px;
  border-radius: 5px 5px 0 0;
  background: linear-gradient(#98b0f4, #7b94e0 25%, #7b96e4 60%, #88a8f4);
  color: #dce4fc;
  font: bold 12px/16px "Open Sans", sans-serif;
}
.wintitle h3 { flex: 1; }
.winicon { width: 21px; height: 18px; }
.winclose { width: 21px; height: 21px; border: 1px solid #fff; border-radius: 3px; background: linear-gradient(135deg, #cc8890, #b05868); }
.winclose svg { width: 15px; height: 15px; margin: 2px; }
.winbody { border: 1px solid #000; background: #c0c0c0; }
.etched { display: flex; justify-content: center; border: 1px solid #808080; border-right-color: #fff; border-bottom-color: #fff; box-shadow: inset 1px 1px 0 #e0e0e0; }
.btn {
  height: 14px;
  padding: 0 3px;
  border: 1px solid;
  border-color: #fff #707070 #707070 #fff;
  background: #c0c0c0;
  line-height: 12px;
}
.btn path { fill: none; stroke: #000; }
.btn.on { background: #404040; color: #909090; border-color: #808080 #fff #fff #808080; }
.btn.on path { stroke: #999; }
.field { display: flex; height: 14px; border: 1px solid #000; background: #fff; }
.field input { flex: 1; width: 0; min-width: 0; padding: 0 1px; font: 10px/12px "DejaVu Sans", sans-serif; }
.spin { flex: none; width: 10px; display: grid; grid-template-rows: 6px 6px; border-left: 1px solid #000; }
.spin button { display: flex; align-items: center; justify-content: center; background: #c0c0c0; }
.spin button + button { border-top: 1px solid #000; }
.spin button::before { content: ""; width: 5px; height: 3px; background: #000; clip-path: polygon(50% 0, 100% 100%, 0 100%); }
.spin button + button::before { clip-path: polygon(0 0, 100% 0, 50% 100%); }
.jack { width: 12px; height: 12px; }
.term { display: flex; flex-direction: column; align-items: center; }
.sign { font: 14px/12px "Liberation Sans", sans-serif; }

.fg .winbody { height: 141px; padding: 7px 16px 0; }
.waves { gap: 6px; height: 21px; padding: 3px 0; }
.wave { width: 50px; height: 13px; padding: 0; }
.wave svg { width: 48px; height: 10px; }
.params { display: grid; grid-template-columns: 52px 57px 49px; grid-auto-rows: 14px; row-gap: 3px; padding: 8px 0 0 8px; }
.unit, .pct { margin-left: 10px; }
.pct { padding-left: 3px; }
.fg .terminals { display: grid; grid-template-columns: 1fr 1fr 1fr; padding-top: 7px; width: 183px; margin-left: -7px; }

.mm .winbody { position: relative; height: 132px; padding: 6px 11px 0; display: flex; flex-direction: column; align-items: stretch; }
.smear { position: absolute; left: 40px; top: 0; width: 64px; height: 6px; stroke: #fff; fill: none; }
.reading { display: block; height: 20px; padding: 2px 18px; border: 2px solid #707070; border-right-color: #e8e8e8; border-bottom-color: #e8e8e8; background: #fff; box-shadow: inset 0 0 0 1px #000; font: 10px/14px "DejaVu Sans", sans-serif; }
.modes { gap: 4px; height: 21px; margin-top: 15px; padding: 3px 0; }
.acdc { align-self: center; gap: 4px; width: 69px; height: 19px; margin-top: 6px; padding: 3px 0; }
.acdc .btn { width: 28px; height: 11px; padding: 0; }
.acdc svg { width: 26px; height: 9px; }
.settings { align-self: center; margin-top: 5px; }
.mm .terminals { display: flex; justify-content: space-between; margin-top: -3px; padding: 0 1px; }

.osc .winbody { display: grid; grid-template-columns: 221px 1fr; gap: 4px; height: 155px; padding: 6px 7px 6px 5px; }
.screen { height: 141px; border: 2px solid #707070; border-right-color: #e8e8e8; border-bottom-color: #e8e8e8; background: #fff; outline: 1px solid #000; outline-offset: -3px; }
.screen svg { width: 100%; height: 100%; }
.screen path { fill: none; stroke: #000; stroke-width: 3; }
.screen .axis { stroke-dasharray: 3 6; }
.screen .ticks { stroke-dasharray: 3 6; }
.controls { min-width: 0; display: flex; flex-direction: column; }
.top { display: flex; justify-content: flex-end; align-items: center; height: 16px; padding-right: 14px; }
.expand { margin-right: 57px; }
.ground { display: flex; gap: 8px; align-items: center; }
.panels { flex: 1; margin-top: 7px; display: grid; grid-template-columns: 125px 1fr; grid-template-rows: 63px 1fr; border-right: 1px solid #e8e8e8; border-bottom: 1px solid #e8e8e8; }
.panel { min-width: 0; display: flex; flex-direction: column; gap: 1px; padding: 0 11px 0 3px; border: 1px solid; border-color: #e8e8e8 transparent transparent #e8e8e8; }
.panel:nth-child(even) { padding: 0 5px 0 2px; }
.panel h4 { width: fit-content; height: 13px; margin: -7px 0 0 -1px; padding: 0 3px; background: #c0c0c0; }
.line { display: flex; align-items: center; justify-content: space-between; padding-left: 2px; }
.short { width: 61px; }
.level { padding-right: 10px; }
.edge { display: flex; align-items: center; height: 14px; padding: 0 8px 0 4px; gap: 4px; }
.edge span { width: 36px; }
.edge .btn { width: 16px; height: 11px; padding: 0; }
.edge .btn svg { width: 14px; height: 9px; }
.edge .jack { margin-left: auto; }
.btnrow { display: flex; align-items: center; gap: 3px; padding: 1px 0 0 2px; }
.btnrow .btn { height: 13px; line-height: 11px; }
.auto { width: 28px; }
.btnrow .jack { margin: 0 15px 0 auto; }

.status { flex: none; height: 24px; display: grid; grid-template-columns: 132px 100px 100px 1fr; border-bottom: 1px solid #fff; }
.status span { margin: 1px 0; padding: 3px 1px; border-right: 2px solid #fff; border-left: 1px solid #a8a598; }
.status span:first-child { border-left: 0; }
.status span:last-child { border-right: 0; }

.taskbar {
  flex: none;
  height: 39px;
  display: flex;
  align-items: center;
  padding-top: 3px;
  background: linear-gradient(#4a90f0 0, #2f6fe4 10%, #245edc 30%, #2460e0 85%, #1c48b0 100%);
  color: #fff;
}
.start {
  flex: none;
  width: 96px;
  height: 36px;
  display: flex;
  align-items: center;
  gap: 5px;
  padding-left: 10px;
  border-radius: 0 12px 12px 0;
  background: linear-gradient(#5cb85c 0, #3c963c 15%, #389838 70%, #2a7a2a 100%);
  box-shadow: inset -3px 0 4px #1f6a20;
  font: italic bold 17px/20px "Open Sans", sans-serif;
  text-shadow: 1px 1px 2px #123;
}
.start svg { width: 20px; height: 20px; }
.dots { flex: none; width: 4px; height: 26px; margin-left: 10px; background: radial-gradient(circle, #1440a0 1px, transparent 1px) 0 0 / 4px 4px; }
.quick { display: flex; gap: 7px; margin-left: 8px; }
.quick button, .quick svg { width: 22px; height: 22px; }
.more { margin-left: 30px; align-self: flex-start; font-size: 14px; color: #c0d8ff; }
.more + .dots { margin-left: 7px; }
.task {
  width: 160px;
  height: 31px;
  margin-left: 6px;
  padding-left: 10px;
  display: flex;
  align-items: center;
  gap: 2px;
  border-radius: 2px;
  background: #1e50b8;
  box-shadow: inset 1px 1px 1px #123a90;
}
.traydots { margin-left: auto; }
.lang { margin: 0 28px 0 6px; padding: 2px 4px; background: #3068d8; }
.tray {
  align-self: stretch;
  display: flex;
  align-items: center;
  gap: 2px;
  margin-top: -2px;
  padding: 0 14px 0 8px;
  border-left: 1px solid #0e4aa8;
  background: linear-gradient(#30b0f8 0, #1590e8 15%, #108ce4 80%, #0c70c0 100%);
}
.tray svg { width: 22px; height: 22px; }
.clock { display: flex; flex-direction: column; align-items: center; gap: 5px; font-size: 11px; }
```
